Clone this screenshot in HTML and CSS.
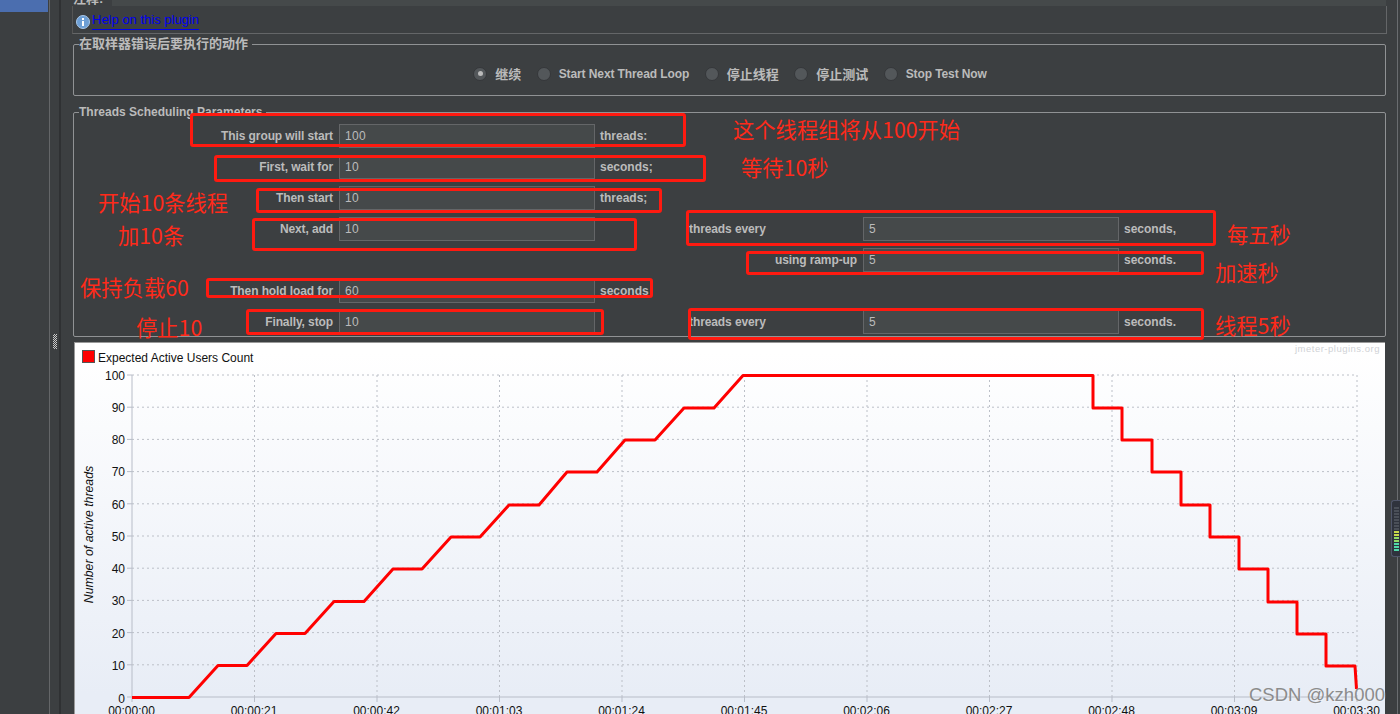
FILE: index.html
```html
<!DOCTYPE html>
<html lang="en">
<head>
    <meta charset="UTF-8">
    <title>Ultimate Thread Group</title>
    <link rel="stylesheet" href="styles.css">
</head>
<body>
    <div class="tree"><div class="tree-selected"></div></div>
    <div class="splitter"><div class="grip"></div></div>

    <div class="main">
        <div class="comments">
            <span class="comments-label">注释:</span>
            <div class="comments-field"></div>
        </div>
        <div class="help">
            <svg class="help-icon" viewBox="0 0 14 14">
                <circle cx="7" cy="7" r="6.5" fill="#6d9fd6" stroke="#a9c8ea"/>
                <rect x="6" y="6" width="2" height="5" fill="#fff"/>
                <rect x="6" y="3" width="2" height="2" fill="#fff"/>
            </svg>
            <a class="help-link">Help on this plugin</a>
        </div>

        <div class="group group-error">
            <span class="group-title">在取样器错误后要执行的动作</span>
            <div class="radios">
                <label class="radio radio-cn"><i class="dot checked"></i>继续</label>
                <label class="radio"><i class="dot"></i>Start Next Thread Loop</label>
                <label class="radio radio-cn"><i class="dot"></i>停止线程</label>
                <label class="radio radio-cn"><i class="dot"></i>停止测试</label>
                <label class="radio"><i class="dot"></i>Stop Test Now</label>
            </div>
        </div>

        <div class="group group-params">
            <span class="group-title">Threads Scheduling Parameters</span>
            <div class="params">
                <span class="lbl">This group will start</span><span class="field">100</span><span class="unit">threads:</span>
                <span></span><span></span><span></span>

                <span class="lbl">First, wait for</span><span class="field">10</span><span class="unit">seconds;</span>
                <span></span><span></span><span></span>

                <span class="lbl">Then start</span><span class="field">10</span><span class="unit">threads;</span>
                <span></span><span></span><span></span>

                <span class="lbl">Next, add</span><span class="field">10</span><span></span>
                <span class="lbl lbl-left">threads every</span><span class="field">5</span><span class="unit">seconds,</span>

                <span></span><span></span><span></span>
                <span class="lbl">using ramp-up</span><span class="field">5</span><span class="unit">seconds.</span>

                <span class="lbl">Then hold load for</span><span class="field">60</span><span class="unit">seconds</span>
                <span></span><span></span><span></span>

                <span class="lbl">Finally, stop</span><span class="field">10</span><span></span>
                <span class="lbl lbl-left">threads every</span><span class="field">5</span><span class="unit">seconds.</span>
            </div>
        </div>

        <div class="chart">
            <svg class="chart-svg" width="1311" height="372" viewBox="74 343 1311 372">
                <!-- grid -->
                <g class="grid">
                    <path d="M132 376H1357M132 408.200H1357M132 440.400H1357M132 472.600H1357M132 504.800H1357M132 537H1357M132 569.200H1357M132 601.400H1357M132 633.600H1357M132 665.800H1357"/>
                    <path d="M254.500 376V698M377 376V698M499.500 376V698M622 376V698M744.500 376V698M867 376V698M989.500 376V698M1112 376V698M1234.500 376V698M1357 376V698"/>
                </g>
                <path class="axis" d="M127 376H132V698H1357M127 408.200H132M127 440.400H132M127 472.600H132M127 504.800H132M127 537H132M127 569.200H132M127 601.400H132M127 633.600H132M127 665.800H132M127 698H132M132 698V703M254.500 698V703M377 698V703M499.500 698V703M622 698V703M744.500 698V703M867 698V703M989.500 698V703M1112 698V703M1234.500 698V703M1357 698V703"/>

                <!-- legend -->
                <rect x="82.500" y="351.500" width="12" height="12" fill="#f00" stroke="#555"/>
                <text class="chart-text" x="98" y="363">Expected Active Users Count</text>
                <text class="watermark" x="1380" y="353" text-anchor="end">jmeter-plugins.org</text>

                <!-- y axis -->
                <g class="chart-text" text-anchor="end">
                    <text x="125" y="381">100</text>
                    <text x="125" y="413">90</text>
                    <text x="125" y="445">80</text>
                    <text x="125" y="477">70</text>
                    <text x="125" y="510">60</text>
                    <text x="125" y="542">50</text>
                    <text x="125" y="574">40</text>
                    <text x="125" y="606">30</text>
                    <text x="125" y="639">20</text>
                    <text x="125" y="671">10</text>
                    <text x="125" y="704">0</text>
                </g>
                <text class="axis-title" transform="translate(93 535.500) rotate(-90)" text-anchor="middle">Number of active threads</text>

                <!-- x axis -->
                <g class="chart-text" text-anchor="middle">
                    <text x="131.500" y="716">00:00:00</text>
                    <text x="254" y="716">00:00:21</text>
                    <text x="376.500" y="716">00:00:42</text>
                    <text x="499" y="716">00:01:03</text>
                    <text x="621.500" y="716">00:01:24</text>
                    <text x="744" y="716">00:01:45</text>
                    <text x="866.500" y="716">00:02:06</text>
                    <text x="989" y="716">00:02:27</text>
                    <text x="1111.500" y="716">00:02:48</text>
                    <text x="1234" y="716">00:03:09</text>
                    <text x="1356.500" y="716">00:03:30</text>
                </g>

                <path class="series" d="M132 698.500H189L218 666.500H247L276 634.500H305L334 602.500H364L393 570H422L451 538H480L509 506H539L567 473H597L625 441H655L684 409H714L743 376.500H1093V409H1122V441H1152V473H1181V506H1210V538H1239V570H1268V603H1297V635H1326V667H1355L1356.500 690"/>
            </svg>
        </div>
    </div>

    <div class="side"></div>

    <!-- hand drawn notes on top of the screenshot -->
    <div class="mark mark-1"></div>
    <div class="mark mark-2"></div>
    <div class="mark mark-3"></div>
    <div class="mark mark-4"></div>
    <div class="mark mark-5"></div>
    <div class="mark mark-6"></div>
    <div class="mark mark-7"></div>
    <div class="mark mark-8"></div>
    <div class="mark mark-9"></div>

    <span class="note note-1">这个线程组将从100开始</span>
    <span class="note note-2">等待10秒</span>
    <span class="note note-3">开始10条线程</span>
    <span class="note note-4">加10条</span>
    <span class="note note-5">每五秒</span>
    <span class="note note-6">加速秒</span>
    <span class="note note-7">保持负载60</span>
    <span class="note note-8">停止10</span>
    <span class="note note-9">线程5秒</span>

    <div class="meter">
        <i class="led"></i><i class="led"></i><i class="led"></i><i class="led"></i><i class="led"></i><i class="led"></i><i class="led"></i><i class="led"></i>
        <i class="led led-y"></i><i class="led led-y"></i><i class="led led-l"></i><i class="led led-l"></i>
        <i class="led led-g"></i><i class="led led-g"></i><i class="led led-g"></i>
    </div>

    <div class="credit">CSDN @kzh000</div>
</body>
</html>
```

FILE: styles.css
```css
html, body {
    margin: 0;
    height: 714px;
    overflow: hidden;
}
body {
    position: relative;
    display: flex;
    background-color: #3c3f41;
    color: #bbb;
    font-family: "Liberation Sans", "Noto Sans CJK SC", sans-serif;
    font-size: 12px;
    font-weight: bold;
}
.tree {
    width: 49px;
    flex: none;
}
.tree-selected {
    width: 48px;
    height: 12px;
    background-color: #4b6eaf;
}
.splitter {
    width: 23px;
    flex: none;
    box-sizing: border-box;
    border-left: 1px solid #646668;
    background: linear-gradient(90deg, #3c3f41 9px, #2f3133 9px, #2f3133 11px, #3c3f41 11px);
}
.grip {
    width: 4px;
    height: 15px;
    margin: 334px 0 0 3px;
    background: repeating-conic-gradient(#c8c8c8 0 25%, #3c3f41 0 50%) 0 0 / 2px 2px;
}
.main {
    width: 1314px;
    flex: none;
    display: flex;
    flex-direction: column;
}
.side {
    flex: 1;
    margin-right: 2px;
    border-right: 1px solid #6a6d70;
}

.comments {
    height: 6px;
    display: flex;
    align-items: flex-end;
    overflow: hidden;
}
.comments-label {
    width: 40px;
    flex: none;
    padding-left: 1px;
    font-size: 13px;
    line-height: 16px;
    margin-bottom: -1px;
    box-sizing: border-box;
}
.comments-field {
    flex: 1;
    height: 6px;
    background-color: #45494a;
}
.help {
    height: 28px;
    width: 1315px;
    box-sizing: border-box;
    border-left: 1px solid #555;
    border-right: 1px solid #646668;
    border-bottom: 1px solid #646668;
    display: flex;
    align-items: flex-start;
    padding: 6px 0 0 3px;
}
.help-icon {
    width: 14px;
    height: 14px;
    margin-top: 3px;
}
.help-link {
    color: #0000ee;
    font-size: 13px;
    font-weight: normal;
    line-height: 15px;
    padding-bottom: 2px;
    border-bottom: 1px solid #0000ee;
    margin-left: 2px;
}

.group {
    position: relative;
    box-sizing: border-box;
    width: 1313px;
    margin-left: 1px;
    border: 1px solid #909294;
    border-radius: 2px;
}
.group-title {
    position: absolute;
    left: 5px;
    top: -9px;
    padding-right: 4px;
    font-size: 13px;
    line-height: 16px;
    background-color: #3c3f41;
    white-space: nowrap;
}
.group-error {
    margin-top: 10px;
    height: 52px;
}
.radios {
    display: flex;
    justify-content: center;
    align-items: center;
    height: 58px;
    padding-left: 1px;
}
.radio {
    display: flex;
    align-items: center;
    margin-right: 15.500px;
    letter-spacing: -0.1px;
}
.radio-cn {
    font-size: 13px;
    letter-spacing: 0;
}
.radio:last-child {
    margin-right: 0;
}
.dot {
    width: 14px;
    height: 14px;
    box-sizing: border-box;
    margin-right: 8px;
    border-radius: 50%;
    background-color: #53575a;
    border: 1px solid #35373a;
    display: flex;
    align-items: center;
    justify-content: center;
}
.dot.checked::after {
    content: "";
    width: 5px;
    height: 5px;
    border-radius: 50%;
    background-color: #bbb;
}

.group-params {
    margin-top: 16px;
    height: 226px;
}
.group-params .group-title {
    font-size: 12px;
    top: -9px;
}
.params {
    display: grid;
    grid-template-columns: 265px 256px 94px 174px 256px 90px;
    grid-auto-rows: 24px;
    row-gap: 7px;
    padding-top: 11px;
    align-items: center;
}
.lbl {
    text-align: right;
    padding-right: 6px;
    letter-spacing: -0.1px;
}
.lbl-left {
    text-align: left;
    padding: 0;
}
.unit {
    padding-left: 5px;
}
.field {
    box-sizing: border-box;
    height: 24px;
    border: 1px solid #646668;
    background-color: #45494a;
    padding-left: 5px;
    line-height: 22px;
    font-weight: normal;
    letter-spacing: 0.3px;
}

.chart {
    margin: 5px 0 0 2px;
    width: 1311px;
    height: 372px;
    background: linear-gradient(#fff, #fff 10px, #e8edf6 350px);
    border-top: 1px solid #9a9a9a;
    border-left: 1px solid #9a9a9a;
    box-sizing: border-box;
}
.chart-svg {
    display: block;
    margin: -1px 0 0 -1px;
    font-family: "Liberation Sans", sans-serif;
}
.grid path {
    fill: none;
    stroke: #bcc0c8;
    stroke-dasharray: 2 3;
}
.axis {
    fill: none;
    stroke: #b8bdc8;
}
.chart-text {
    font-size: 12px;
    font-weight: normal;
    fill: #111;
}
.axis-title {
    font-size: 12.300px;
    font-style: italic;
    font-weight: normal;
    fill: #111;
}
.watermark {
    font-size: 9.500px;
    font-weight: normal;
    letter-spacing: 0.5px;
    fill: #d0d2d6;
}
.series {
    fill: none;
    stroke: #f00;
    stroke-width: 3px;
    stroke-linejoin: round;
}

.mark {
    position: absolute;
    box-sizing: border-box;
    border: 3px solid #ff1a10;
    border-radius: 3px;
}
.mark-1 { left: 190px; top: 113px; width: 496px; height: 34px; }
.mark-2 { left: 214px; top: 155px; width: 492px; height: 27px; }
.mark-3 { left: 256px; top: 188px; width: 406px; height: 25px; }
.mark-4 { left: 252px; top: 218px; width: 385px; height: 33px; }
.mark-5 { left: 686px; top: 210px; width: 530px; height: 36px; }
.mark-6 { left: 746px; top: 251px; width: 458px; height: 24px; }
.mark-7 { left: 206px; top: 278px; width: 447px; height: 20px; }
.mark-8 { left: 246px; top: 309px; width: 358px; height: 26px; }
.mark-9 { left: 688px; top: 308px; width: 516px; height: 32px; }

.note {
    position: absolute;
    color: #ff2a1a;
    font-family: "Noto Sans CJK SC", sans-serif;
    font-size: 21.300px;
    font-weight: normal;
    line-height: 24px;
    white-space: nowrap;
}
.note-1 { left: 733px; top: 117px; }
.note-2 { left: 741px; top: 155px; }
.note-3 { left: 98px; top: 190px; }
.note-4 { left: 118px; top: 223px; }
.note-5 { left: 1227px; top: 222px; }
.note-6 { left: 1215px; top: 260px; }
.note-7 { left: 80px; top: 275px; }
.note-8 { left: 136px; top: 315px; }
.note-9 { left: 1215px; top: 313px; }

.meter {
    position: absolute;
    left: 1391px;
    top: 500px;
    width: 9px;
    height: 57px;
    box-sizing: border-box;
    padding: 6px 0 0 2px;
    background-color: #2f333d;
    border: 1px solid #50566a;
    border-right: 0;
    border-radius: 3px 0 0 3px;
}
.led {
    display: block;
    width: 5px;
    height: 2px;
    margin-bottom: 1px;
    background-color: #4a4f58;
}
.led-y {
    background-color: #c8d84a;
}
.led-l {
    background-color: #8fdc66;
}
.led-g {
    background-color: #4fd8a8;
}

.credit {
    position: absolute;
    right: 15px;
    top: 683px;
    color: #8c8c8c;
    font-size: 18.500px;
    font-weight: normal;
    line-height: 24px;
    text-shadow: 1px 1px 0 rgba(255, 255, 255, 0.35);
}
```
